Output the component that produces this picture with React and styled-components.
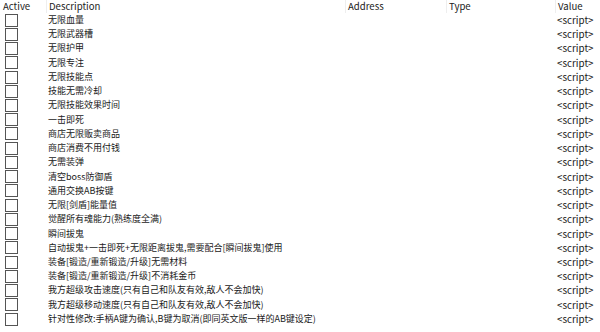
import React from "react";
import styled, { createGlobalStyle } from "styled-components";

const Global = createGlobalStyle`
  html, body { margin: 0; padding: 0; background: #ffffff; }
  body { width: 600px; height: 332px; overflow: hidden; }
`;

const Table = styled.div`
  width: 600px;
  height: 332px;
  background: #fff;
  font-family: "Noto Sans CJK SC", "Noto Sans", sans-serif;
  font-size: 9px;
  color: #1a1a1a;
  display: flex;
  flex-direction: column;
`;

const cols = "46px 299px 101px 109px 45px";

const HeaderRow = styled.div`
  display: grid;
  grid-template-columns: ${cols};
  height: 13px;
  align-items: center;
`;

const HeadCell = styled.div`
  height: 13px;
  line-height: 13px;
  padding-left: ${(p) => p.$pad || 2}px;
  border-left: ${(p) => (p.$first ? "none" : "1px solid #eeeeee")};
  font-size: 9.6px;
  color: #222;
  white-space: nowrap;
  overflow: hidden;
`;

const Row = styled.div`
  display: grid;
  grid-template-columns: ${cols};
  height: 14.24px;
  align-items: center;
`;

const CheckCell = styled.div`
  display: flex;
  align-items: center;
  padding-left: 5px;
  height: 14.24px;
`;

const Box = styled.div`
  width: 11px;
  height: 11px;
  border: 1px solid #555;
  background: #fff;
`;

const Cell = styled.div`
  padding-left: ${(p) => p.$pad || 2}px;
  font-size: ${(p) => p.$size || 9}px;
  white-space: nowrap;
  overflow: visible;
  line-height: 14.24px;
`;

const items = [
  "无限血量",
  "无限武器槽",
  "无限护甲",
  "无限专注",
  "无限技能点",
  "技能无需冷却",
  "无限技能效果时间",
  "一击即死",
  "商店无限贩卖商品",
  "商店消费不用付钱",
  "无需装弹",
  "清空boss防御盾",
  "通用交换AB按键",
  "无限[剑盾]能量值",
  "觉醒所有魂能力(熟练度全满)",
  "瞬间拔鬼",
  "自动拔鬼+一击即死+无限距离拔鬼,需要配合[瞬间拔鬼]使用",
  "装备[锻造/重新锻造/升级]无需材料",
  "装备[锻造/重新锻造/升级]不消耗金币",
  "我方超级攻击速度(只有自己和队友有效,敌人不会加快)",
  "我方超级移动速度(只有自己和队友有效,敌人不会加快)",
  "针对性修改:手柄A键为确认,B键为取消(即同英文版一样的AB键设定)",
];

export default function App() {
  return (
    <>
      <Global />
      <Table>
        <HeaderRow>
          <HeadCell $first $pad={3}>Active</HeadCell>
          <HeadCell>Description</HeadCell>
          <HeadCell>Address</HeadCell>
          <HeadCell>Type</HeadCell>
          <HeadCell>Value</HeadCell>
        </HeaderRow>
        {items.map((t, i) => (
          <Row key={i}>
            <CheckCell>
              <Box />
            </CheckCell>
            <Cell>{t}</Cell>
            <Cell />
            <Cell />
            <Cell $size={9.8}>{"<script>"}</Cell>
          </Row>
        ))}
      </Table>
    </>
  );
}
